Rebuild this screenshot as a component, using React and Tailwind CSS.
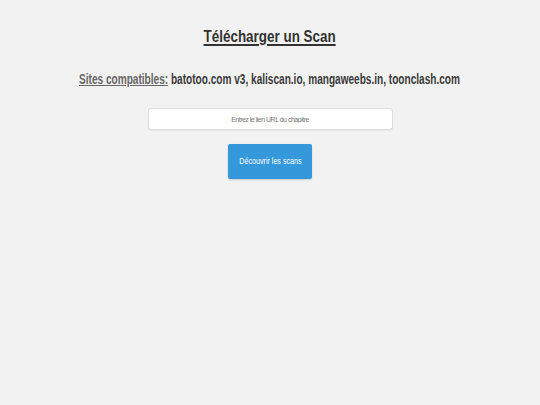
export default function App() {
    return (
        <div className="min-h-[405px] bg-[#f2f2f2] text-center pt-[25px]" style={{ fontFamily: '"Liberation Sans", Arial, sans-serif' }}>
            <h1 className="text-[17px] leading-[24px] font-bold text-[#333]">
                <span className="inline-block scale-x-[0.79] underline underline-offset-2 decoration-[1.5px]">Télécharger un Scan</span>
            </h1>
            <p className="mt-[20px] text-[14px] leading-[20px] font-bold text-[#3a3a3a] whitespace-nowrap">
                <span className="inline-block scale-x-[0.72]">
                    <span className="underline text-[#666]">Sites compatibles:</span> batotoo.com v3, kaliscan.io, mangaweebs.in, toonclash.com
                </span>
            </p>
            <div className="mt-[19px] flex justify-center">
                <input
                    type="text"
                    placeholder="Entrez le lien URL du chapitre"
                    className="w-[245px] h-[22px] bg-white border border-[#ddd] rounded-[3px] text-center text-[7px] tracking-[-0.5px] placeholder:text-[#777] outline-none shadow-[0_1px_1px_rgba(0,0,0,0.04)]"
                />
            </div>
            <div className="mt-[14px] flex justify-center">
                <button className="w-[84px] h-[35px] bg-[#3498db] text-white text-[9.5px] rounded-[2px] shadow-[0_1px_2px_rgba(0,0,0,0.15)]">
                    <span className="inline-block scale-x-[0.75] whitespace-nowrap">Découvrir les scans</span>
                </button>
            </div>
        </div>
    );
}
